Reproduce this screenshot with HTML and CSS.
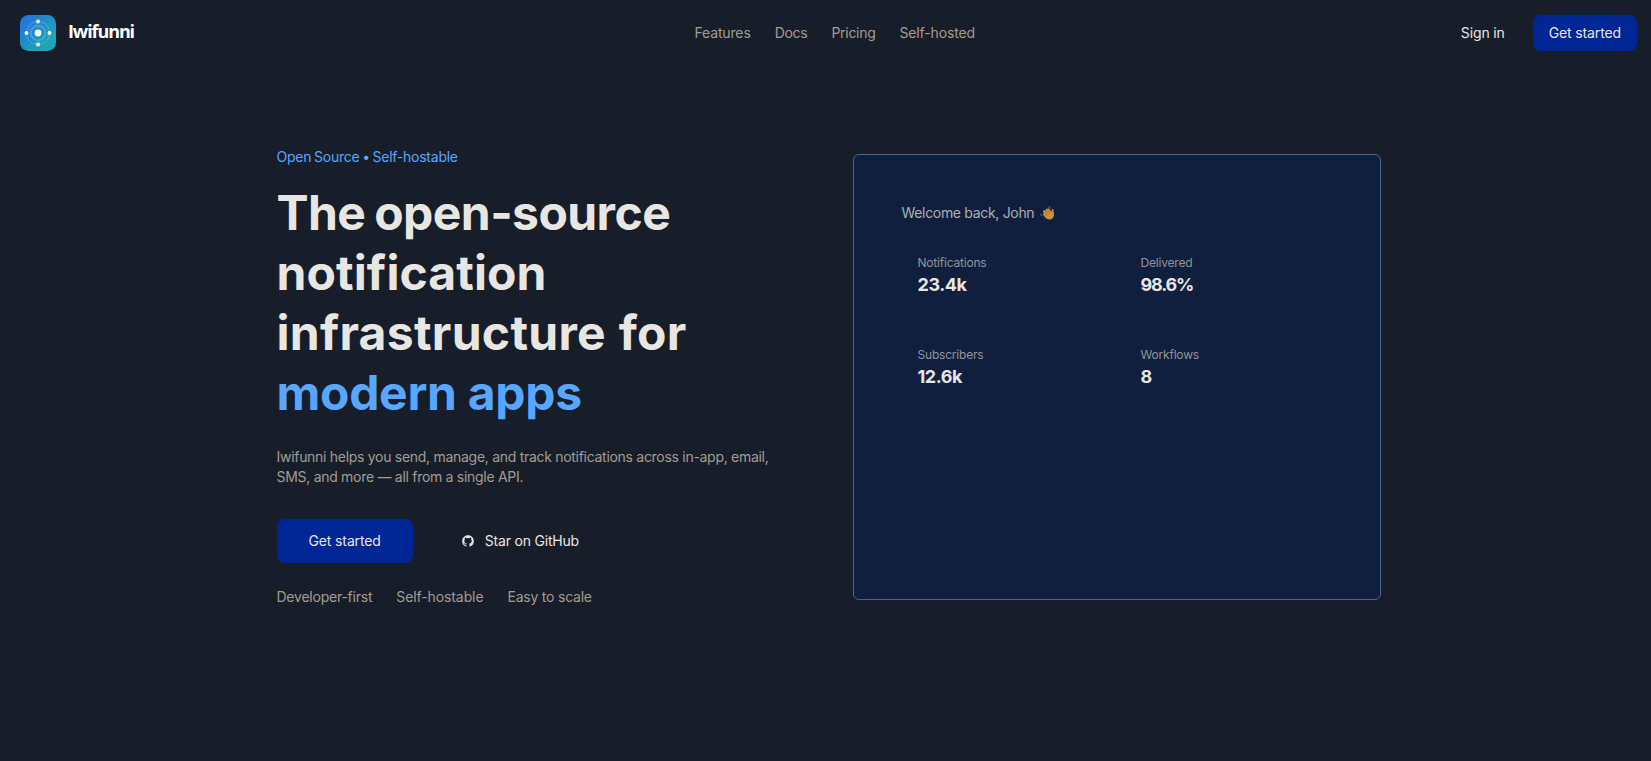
FILE: index.html
```html
<!DOCTYPE html>
<html lang="en">
<head>
    <meta charset="UTF-8">
    <meta name="viewport" content="width=device-width, initial-scale=1.0">
    <title>Iwifunni</title>
    <link rel="stylesheet" href="styles.css">
</head>
<body>

    <header class="header">
        <a class="brand" href="#">
            <svg class="brand-logo" viewBox="0 0 36 36">
                <defs>
                    <linearGradient id="logo-bg" x1="0" y1="0" x2="1" y2="1">
                        <stop offset="0.1" stop-color="#2673e0"/>
                        <stop offset="0.8" stop-color="#1ba8b2"/>
                    </linearGradient>
                </defs>
                <rect width="36" height="36" rx="8.5" fill="url(#logo-bg)"/>
                <circle cx="18" cy="18" r="11.5" fill="none" stroke="#fff" stroke-opacity="0.35" stroke-width="0.9" stroke-dasharray="2 1"/>
                <circle cx="18" cy="18" r="7.3" fill="#1c86d0" fill-opacity="0.35" stroke="#5fb0e0" stroke-opacity="0.6" stroke-width="2"/>
                <circle cx="18" cy="18" r="3.4" fill="#fff"/>
                <circle cx="18" cy="6.5" r="1.9" fill="#fff"/>
                <circle cx="18" cy="29.5" r="1.9" fill="#fff"/>
                <circle cx="6.5" cy="18" r="1.9" fill="#fff"/>
                <circle cx="29.5" cy="18" r="1.9" fill="#fff"/>
            </svg>
            <span class="brand-name">Iwifunni</span>
        </a>

        <nav class="nav">
            <a href="#">Features</a>
            <a class="snug" href="#">Docs</a>
            <a class="snug" href="#">Pricing</a>
            <a href="#">Self-hosted</a>
        </nav>

        <div class="actions">
            <a class="sign-in" href="#">Sign in</a>
            <a class="button" href="#">Get started</a>
        </div>
    </header>

    <main class="hero">
        <div class="hero-text">
            <div class="eyebrow">Open Source • Self-hostable</div>

            <h1>
                <span class="line line-1">The open-source</span>
                <span class="line line-2">notification</span>
                <span class="line line-3">infrastructure for</span>
                <span class="line line-4">modern apps</span>
            </h1>

            <p class="lead">Iwifunni helps you send, manage, and track notifications across in-app, email,<br>SMS, and more — all from a single API.</p>

            <div class="hero-buttons">
                <a class="button button-large" href="#">Get started</a>
                <a class="button-ghost" href="#">
                    <svg class="github-icon" viewBox="0 0 24 24" fill="currentColor">
                        <path d="M12 2C6.475 2 2 6.475 2 12a9.994 9.994 0 0 0 6.838 9.488c.5.087.687-.213.687-.476 0-.237-.013-1.024-.013-1.862-2.512.463-3.162-.612-3.362-1.175-.113-.288-.6-1.175-1.025-1.413-.35-.187-.85-.65-.013-.662.788-.013 1.35.725 1.538 1.025.9 1.512 2.338 1.087 2.912.825.088-.65.35-1.087.638-1.337-2.225-.25-4.55-1.113-4.55-4.938 0-1.088.387-1.987 1.025-2.688-.1-.25-.45-1.275.1-2.65 0 0 .837-.262 2.75 1.026a9.28 9.28 0 0 1 2.5-.338c.85 0 1.7.112 2.5.337 1.912-1.3 2.75-1.024 2.75-1.024.55 1.375.2 2.4.1 2.65.637.7 1.025 1.587 1.025 2.687 0 3.838-2.337 4.688-4.562 4.938.362.312.675.912.675 1.85 0 1.337-.013 2.412-.013 2.75 0 .262.188.574.688.474A10.016 10.016 0 0 0 22 12c0-5.525-4.475-10-10-10z"/>
                    </svg>
                    <span>Star on GitHub</span>
                </a>
            </div>

            <div class="points">
                <span class="point-dev">Developer-first</span>
                <span class="point-host">Self-hostable</span>
                <span class="point-scale">Easy to scale</span>
            </div>
        </div>

        <div class="card">
            <div class="welcome">
                <span>Welcome back, John</span>
                <svg class="wave" viewBox="0 0 16 16">
                    <path d="M9.3 1.6q2 .1 2.4 2M1.5 8.5q.2 2 1.8 2.4" fill="none" stroke="#2b5f9e" stroke-width="1.2"/>
                    <path d="M4.2 5.8Q5 4.6 6 5.4L7 6.3 6.4 4.5Q7 3.2 8.2 4L8.6 3.4Q9.8 2.8 10.4 4L12.5 6.8 12.8 4.6Q13.8 3.3 14.5 4.6L15 10.2Q14.6 13.8 11.2 14.4 8 14.6 6.2 12.4L3.9 9.6Q3.6 8.6 4.5 8.2L5 8.3 4 7Z" fill="#c9933a"/>
                    <path d="M6 5.8l3.6 4M8 4.4l3 3.8M5.2 8.2l2.8 3" stroke="#8c6527" stroke-width="0.6"/>
                </svg>
            </div>

            <div class="stats">
                <div class="stat">
                    <div class="stat-label">Notifications</div>
                    <div class="stat-value">23.4k</div>
                </div>
                <div class="stat">
                    <div class="stat-label">Delivered</div>
                    <div class="stat-value percent">98.6%</div>
                </div>
                <div class="stat">
                    <div class="stat-label">Subscribers</div>
                    <div class="stat-value">12.6k</div>
                </div>
                <div class="stat">
                    <div class="stat-label">Workflows</div>
                    <div class="stat-value">8</div>
                </div>
            </div>
        </div>
    </main>

</body>
</html>
```
FILE: styles.css
```css
* {
    box-sizing: border-box;
}

body {
    margin: 0;
    background-color: #171e2a;
    color: #e8e6e3;
    font-family: Inter, "Liberation Sans", sans-serif;
    font-size: 14px;
    line-height: 20px;
}

a {
    color: inherit;
    text-decoration: none;
}

.header {
    display: flex;
    align-items: center;
    height: 66px;
    padding: 0 14px 0 20px;
}

.brand {
    display: flex;
    align-items: center;
    gap: 12px;
    width: 674.5px;
}

.brand-logo {
    width: 36px;
    height: 36px;
}

.brand-name {
    padding-bottom: 4px;
    color: #fff;
    font-family: "Open Sans", "Noto Sans", sans-serif;
    font-size: 18px;
    font-weight: 700;
    line-height: 28px;
    letter-spacing: -1.1px;
}

.nav {
    display: flex;
    gap: 24px;
    color: #a49c91;
    letter-spacing: -0.15px;
}

.nav .snug {
    letter-spacing: -0.28px;
}

.actions {
    display: flex;
    align-items: center;
    gap: 28px;
    margin-left: auto;
    letter-spacing: -0.13px;
}

.button {
    padding: 8px 16px;
    border-radius: 8px;
    background-color: #002594;
    letter-spacing: -0.13px;
}

.button-large {
    padding: 12px 32px;
}

.hero {
    display: grid;
    grid-template-columns: 1fr 1fr;
    gap: 48px;
    align-items: center;
    width: 1104px;
    margin: 81px 0 0 276.5px;
}

.eyebrow {
    color: #58a6ff;
    letter-spacing: -0.25px;
    word-spacing: -0.9px;
}

h1 {
    margin: 16px 0 24px;
    font-size: 48px;
    font-weight: 700;
    line-height: 60px;
}

.line {
    display: block;
    white-space: nowrap;
}

.line-1 {
    letter-spacing: -0.55px;
    word-spacing: -2px;
}

.line-2 {
    letter-spacing: 0.1px;
}

.line-3 {
    letter-spacing: 0.3px;
    word-spacing: 1px;
}

.line-4 {
    color: #58a6ff;
    letter-spacing: -0.3px;
}

.lead {
    margin: 0 0 32px;
    color: #a49c91;
    letter-spacing: -0.29px;
    white-space: nowrap;
}

.hero-buttons {
    display: flex;
    gap: 16px;
    margin-bottom: 24px;
}

.button-ghost {
    display: flex;
    align-items: center;
    gap: 10px;
    padding: 12px 32px;
    letter-spacing: -0.2px;
}

.github-icon {
    width: 14px;
    height: 14px;
}

.points {
    display: flex;
    gap: 24px;
    color: #a49c91;
}

.point-dev {
    letter-spacing: -0.23px;
}

.point-host {
    letter-spacing: -0.1px;
}

.point-scale {
    letter-spacing: -0.22px;
}

.card {
    height: 446px;
    padding: 48px;
    border: 1px solid #4a6590;
    border-radius: 6px;
    background-color: #111f3e;
}

.welcome {
    display: flex;
    align-items: center;
    gap: 4.5px;
    color: #acafb4;
    letter-spacing: -0.32px;
}

.wave {
    width: 16px;
    height: 16px;
}

.stats {
    display: grid;
    grid-template-columns: 1fr 1fr;
    gap: 16px;
    margin-top: 16px;
}

.stat {
    padding: 16px;
}

.stat-label {
    color: #90949a;
    font-size: 12px;
    line-height: 16px;
    letter-spacing: -0.2px;
}

.stat-value {
    font-size: 18px;
    font-weight: 700;
    line-height: 28px;
    letter-spacing: -0.45px;
}

.percent {
    letter-spacing: -1.2px;
}
```
